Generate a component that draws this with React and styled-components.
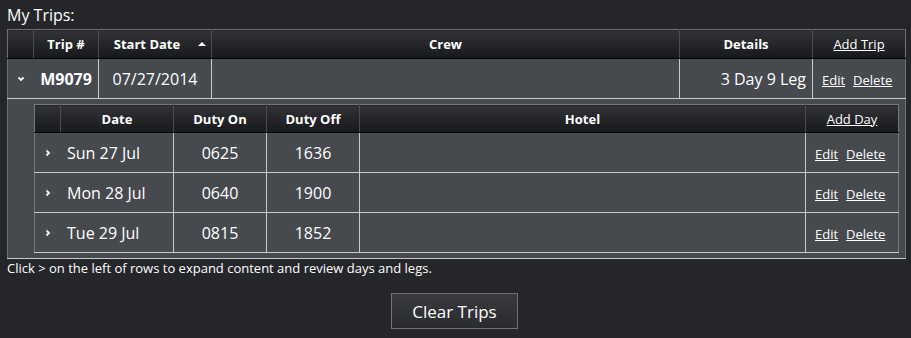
import React from "react";
import styled, { createGlobalStyle } from "styled-components";

const Global = createGlobalStyle`
  html, body { margin: 0; padding: 0; }
  body {
    background: #25262a;
    font-family: "Open Sans", "Noto Sans", sans-serif;
    color: #fff;
    width: 911px;
    height: 338px;
    overflow: hidden;
  }
`;

const Page = styled.div`
  padding: 5px 6px 0 7px;
`;

const Title = styled.div`
  font-size: 16px;
  line-height: 20px;
  height: 24px;
`;

const Table = styled.table`
  table-layout: fixed;
  border-collapse: collapse;
  width: ${(p) => p.$w}px;
  border: 1px solid ${(p) => (p.$inner ? "#76787c" : "#6e7074")};
`;

const HeadCell = styled.th`
  height: ${(p) => p.$h}px;
  padding: 0 ${(p) => p.$pr || 0}px 0 ${(p) => p.$pl || 0}px;
  background: linear-gradient(#313337, #17181b);
  border-left: 1px solid #4a4c50;
  border-bottom: 1px solid #050505;
  font-size: 13px;
  font-weight: 700;
  text-align: ${(p) => p.$align || "center"};
  color: #fff;
  position: relative;
  &:first-child { border-left: none; }
`;

const Cell = styled.td`
  height: ${(p) => p.$h}px;
  padding: 0 ${(p) => p.$pr || 0}px 0 ${(p) => p.$pl || 0}px;
  background: #46494e;
  border-left: 1px solid ${(p) => (p.$noLine ? "transparent" : "#c9cacc")};
  border-bottom: 1px solid #c9cacc;
  font-size: ${(p) => p.$fs || 16}px;
  font-weight: ${(p) => (p.$bold ? 700 : 400)};
  text-align: ${(p) => p.$align || "center"};
  white-space: nowrap;
  &:first-child { border-left: none; }
`;

const NestCell = styled.td`
  background: #46494e;
  padding: 5px 6px 5px 26px;
  border-bottom: 1px solid #c9cacc;
`;

const Link = styled.a`
  color: #fff;
  text-decoration: underline;
  font-size: 13px;
  font-weight: 400;
  margin-right: ${(p) => p.$mr || 0}px;
  cursor: pointer;
`;

const SortArrow = styled.span`
  position: absolute;
  right: 5px;
  top: 12px;
  width: 0;
  height: 0;
  border-left: 4px solid transparent;
  border-right: 4px solid transparent;
  border-bottom: 4px solid #fff;
`;

const Chevron = ({ down }) => (
  <svg width="8" height="8" viewBox="0 0 8 8" style={{ display: "block", margin: "0 auto" }}>
    {down ? (
      <path d="M1.5 2.5 L4 5 L6.5 2.5" stroke="#fff" strokeWidth="1.8" fill="none" />
    ) : (
      <path d="M2.5 1.5 L5 4 L2.5 6.5" stroke="#fff" strokeWidth="1.8" fill="none" />
    )}
  </svg>
);

const Note = styled.div`
  font-size: 13px;
  line-height: 17px;
  margin-top: 1px;
`;

const ButtonRow = styled.div`
  display: flex;
  justify-content: center;
  padding-top: 16px;
  padding-right: 3px;
`;

const Button = styled.button`
  width: 127px;
  height: 36px;
  background: linear-gradient(#393a3e, #2a2b2f);
  border: 1px solid #707276;
  color: #fff;
  font-family: "Open Sans", "Noto Sans", sans-serif;
  font-size: 17px;
  padding: 0;
`;

const days = [
  { date: "Sun 27 Jul", on: "0625", off: "1636" },
  { date: "Mon 28 Jul", on: "0640", off: "1900" },
  { date: "Tue 29 Jul", on: "0815", off: "1852" },
];

export default function App() {
  return (
    <>
      <Global />
      <Page>
        <Title>My Trips:</Title>
        <Table $w={899}>
          <colgroup>
            <col style={{ width: 26 }} />
            <col style={{ width: 65 }} />
            <col style={{ width: 113 }} />
            <col style={{ width: 468 }} />
            <col style={{ width: 133 }} />
            <col style={{ width: 93 }} />
          </colgroup>
          <thead>
            <tr>
              <HeadCell $h={28}></HeadCell>
              <HeadCell $h={28}>Trip #</HeadCell>
              <HeadCell $h={28} $pr={16}>
                Start Date
                <SortArrow />
              </HeadCell>
              <HeadCell $h={28}>Crew</HeadCell>
              <HeadCell $h={28}>Details</HeadCell>
              <HeadCell $h={28}>
                <Link>Add Trip</Link>
              </HeadCell>
            </tr>
          </thead>
          <tbody>
            <tr>
              <Cell $h={39} $noLine>
                <Chevron down />
              </Cell>
              <Cell $h={39} $bold $noLine>M9079</Cell>
              <Cell $h={39}>07/27/2014</Cell>
              <Cell $h={39}></Cell>
              <Cell $h={39} $align="right" $pr={6}>3 Day 9 Leg</Cell>
              <Cell $h={39} $align="left" $pl={9}>
                <Link $mr={8}>Edit</Link>
                <Link>Delete</Link>
              </Cell>
            </tr>
            <tr>
              <NestCell colSpan={6}>
                <Table $w={864} $inner>
                  <colgroup>
                    <col style={{ width: 26 }} />
                    <col style={{ width: 113 }} />
                    <col style={{ width: 93 }} />
                    <col style={{ width: 93 }} />
                    <col style={{ width: 446 }} />
                    <col style={{ width: 93 }} />
                  </colgroup>
                  <thead>
                    <tr>
                      <HeadCell $h={27}></HeadCell>
                      <HeadCell $h={27}>Date</HeadCell>
                      <HeadCell $h={27}>Duty On</HeadCell>
                      <HeadCell $h={27}>Duty Off</HeadCell>
                      <HeadCell $h={27}>Hotel</HeadCell>
                      <HeadCell $h={27}>
                        <Link>Add Day</Link>
                      </HeadCell>
                    </tr>
                  </thead>
                  <tbody>
                    {days.map((d) => (
                      <tr key={d.date}>
                        <Cell $h={39}>
                          <Chevron />
                        </Cell>
                        <Cell $h={39} $align="left" $pl={6} $noLine>{d.date}</Cell>
                        <Cell $h={39}>{d.on}</Cell>
                        <Cell $h={39}>{d.off}</Cell>
                        <Cell $h={39}></Cell>
                        <Cell $h={39} $align="left" $pl={9}>
                          <Link $mr={8}>Edit</Link>
                          <Link>Delete</Link>
                        </Cell>
                      </tr>
                    ))}
                  </tbody>
                </Table>
              </NestCell>
            </tr>
          </tbody>
        </Table>
        <Note>Click &gt; on the left of rows to expand content and review days and legs.</Note>
        <ButtonRow>
          <Button>Clear Trips</Button>
        </ButtonRow>
      </Page>
    </>
  );
}
